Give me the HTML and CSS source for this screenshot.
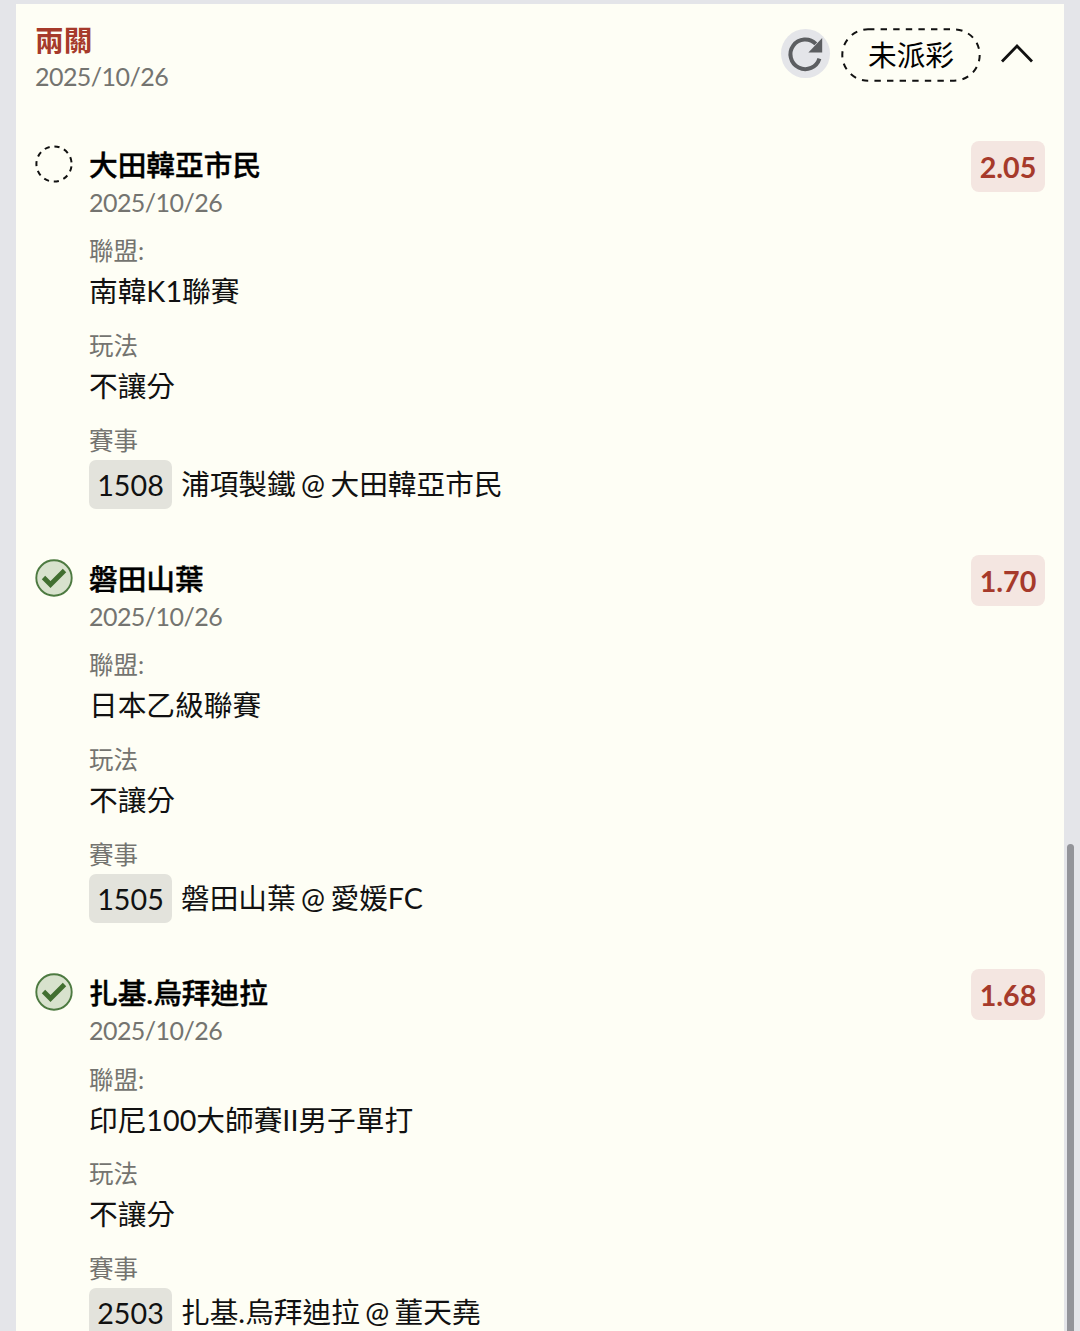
FILE: index.html
```html
<!DOCTYPE html>
<html lang="zh-Hant">
<head>
  <meta charset="UTF-8" />
  <meta name="viewport" content="width=device-width, initial-scale=1.0"/>
  <title>兩關</title>
  <link rel="stylesheet" href="styles.css">
</head>
<body>

  <div class="ticket">
    <!-- Ticket header -->
    <div class="ticket-header">
      <div>
        <div class="ticket-title">兩關</div>
        <div class="date">2025/10/26</div>
      </div>
      <div class="ticket-actions">
        <button class="refresh">
          <svg width="49" height="49" viewBox="0 0 49 49">
            <path d="M38.4 29.6A14.8 14.8 0 1 1 34.8 14.9" fill="none" stroke="#5c5e61" stroke-width="4"/>
            <path d="M41.2 9V23.4H27.4Z" fill="#5c5e61"/>
          </svg>
        </button>
        <svg class="status" width="140" height="54" viewBox="0 0 140 54">
          <rect x="1.3" y="1.3" width="137.4" height="51.4" rx="25.7" fill="none" stroke="#111" stroke-width="2" stroke-dasharray="6.4 6.2"/>
          <text x="70" y="37.5" text-anchor="middle">未派彩</text>
        </svg>
        <svg class="chevron" width="34" height="22" viewBox="0 0 34 22">
          <path d="M2 18.5L17 3L32 18.5" fill="none" stroke="#111" stroke-width="2.8"/>
        </svg>
      </div>
    </div>

    <div class="bet">
      <svg class="icon" width="38" height="38" viewBox="0 0 38 38">
        <circle cx="19" cy="19" r="17.6" fill="none" stroke="#111" stroke-width="2" stroke-dasharray="5.2 4.853" stroke-dashoffset="-2.4"/>
      </svg>
      <div class="bet-body">
        <div class="name">大田韓亞市民</div>
        <div class="date">2025/10/26</div>
        <div class="fields">
          <div class="field"><div class="label">聯盟:</div><div class="value">南韓K1聯賽</div></div>
          <div class="field"><div class="label">玩法</div><div class="value">不讓分</div></div>
          <div class="field">
            <div class="label">賽事</div>
            <div class="match"><span class="code">1508</span><span>浦項製鐵 <span class="at">@</span> 大田韓亞市民</span></div>
          </div>
        </div>
      </div>
      <div class="odds">2.05</div>
    </div>

    <div class="bet">
      <svg class="icon" width="38" height="38" viewBox="0 0 38 38">
        <circle cx="19" cy="19" r="17.7" fill="#d8e2cd" stroke="#4d7a41" stroke-width="1.9"/>
        <path d="M8.5 18.5L15.5 25.5L29.5 11.5" fill="none" stroke="#416f30" stroke-width="4.8"/>
      </svg>
      <div class="bet-body">
        <div class="name">磐田山葉</div>
        <div class="date">2025/10/26</div>
        <div class="fields">
          <div class="field"><div class="label">聯盟:</div><div class="value">日本乙級聯賽</div></div>
          <div class="field"><div class="label">玩法</div><div class="value">不讓分</div></div>
          <div class="field">
            <div class="label">賽事</div>
            <div class="match"><span class="code">1505</span><span>磐田山葉 <span class="at">@</span> 愛媛FC</span></div>
          </div>
        </div>
      </div>
      <div class="odds">1.70</div>
    </div>

    <div class="bet">
      <svg class="icon" width="38" height="38" viewBox="0 0 38 38">
        <circle cx="19" cy="19" r="17.7" fill="#d8e2cd" stroke="#4d7a41" stroke-width="1.9"/>
        <path d="M8.5 18.5L15.5 25.5L29.5 11.5" fill="none" stroke="#416f30" stroke-width="4.8"/>
      </svg>
      <div class="bet-body">
        <div class="name">扎基.烏拜迪拉</div>
        <div class="date">2025/10/26</div>
        <div class="fields">
          <div class="field"><div class="label">聯盟:</div><div class="value">印尼100大師賽II男子單打</div></div>
          <div class="field"><div class="label">玩法</div><div class="value">不讓分</div></div>
          <div class="field">
            <div class="label">賽事</div>
            <div class="match"><span class="code">2503</span><span>扎基.烏拜迪拉 <span class="at">@</span> 董天堯</span></div>
          </div>
        </div>
      </div>
      <div class="odds">1.68</div>
    </div>
  </div>

  <div class="scrollbar"></div>

</body>
</html>
```
FILE: styles.css
```css
* {
  box-sizing: border-box;
}

body {
  font-family: Lato, "Noto Sans CJK TC", sans-serif;
  font-size: 28.7px;
  background-color: #e4e5e9;
  color: #111;
  height: 1331px;
  margin: 0;
  padding: 4px 16px 0;
  overflow: hidden;
  position: relative;
}

.ticket {
  background-color: #fefef5;
  height: 1327px;
  padding: 15px 19px 0;
  overflow: hidden;
}

.ticket-header {
  display: flex;
  justify-content: space-between;
  height: 122px;
}

.ticket-title {
  color: #a63a2b;
  font-weight: 700;
  line-height: 42px;
}

.date {
  color: #747470;
  font-size: 25px;
  letter-spacing: -0.55px;
  line-height: 30px;
}

.ticket-actions {
  display: flex;
  align-items: flex-start;
  padding-right: 11px;
}

.refresh {
  width: 49px;
  height: 49px;
  margin: 10px 11px 0 0;
  padding: 0;
  border: none;
  border-radius: 50%;
  background-color: #e4e5e9;
}

.refresh svg {
  display: block;
}

.status {
  margin: 9px 19px 0 0;
}

.chevron {
  margin-top: 24px;
}

.bet {
  display: flex;
  align-items: flex-start;
  height: 368.3px;
  margin-bottom: 45.9px;
}

.icon {
  flex: none;
  margin: 3.5px 16.5px 0 -0.5px;
}

.bet-body {
  flex: 1;
  padding-top: 3px;
}

.name {
  font-weight: 500;
  color: #000;
  line-height: 43px;
  -webkit-text-stroke: 0.4px #000;
}

.fields {
  display: flex;
  flex-direction: column;
  gap: 16.8px;
  padding-top: 18.2px;
}

.label {
  color: #747470;
  font-size: 24.5px;
  line-height: 32px;
  margin-bottom: 3px;
}

.value {
  line-height: 43px;
}

.match {
  display: flex;
  align-items: center;
  gap: 9px;
  line-height: 49px;
}

.code {
  width: 83px;
  height: 49px;
  border-radius: 7px;
  background-color: #e3e3dc;
  line-height: 51px;
  text-align: center;
}

.at {
  margin: 0 -2px;
  line-height: 1;
}

.odds {
  width: 74px;
  height: 51px;
  border-radius: 8px;
  background-color: #f4e6e1;
  color: #a63a2b;
  font-weight: 700;
  line-height: 53px;
  text-align: center;
}

/* Scroll thumb over the page edge */
.scrollbar {
  position: absolute;
  top: 844px;
  right: 6px;
  width: 7px;
  height: 487px;
  border-radius: 4px 4px 0 0;
  background-color: #939499;
}
```
